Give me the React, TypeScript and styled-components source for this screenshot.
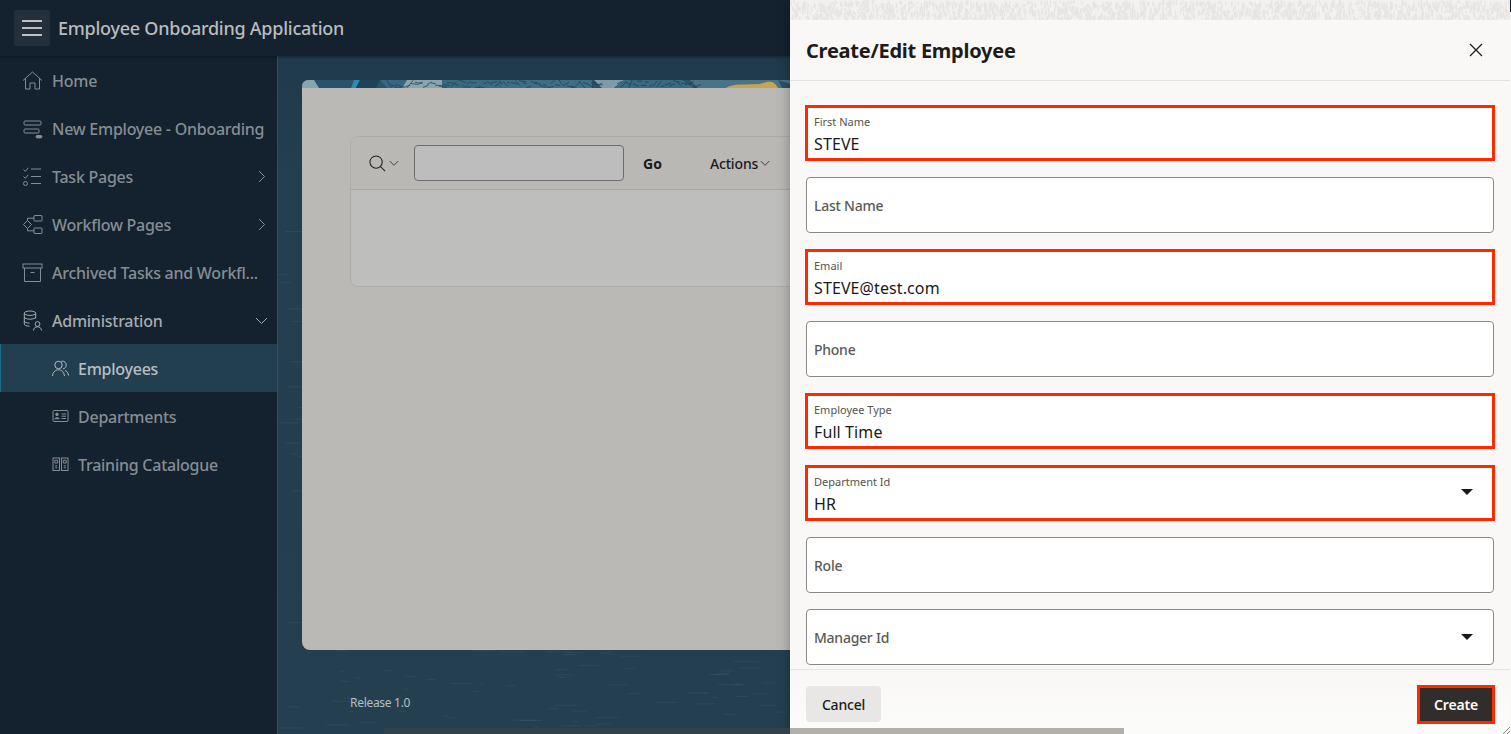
import React from "react";
import styled, { createGlobalStyle } from "styled-components";

const Global = createGlobalStyle`
  html, body { margin: 0; padding: 0; width: 100%; height: 100%; overflow: hidden; background: #f9f8f6; }
  body { font-family: "Noto Sans", "Open Sans", Arial, sans-serif; }
  * { box-sizing: border-box; }
`;

const Page = styled.div`
  position: relative;
  width: 1511px;
  height: 734px;
  overflow: hidden;
  display: flex;
  flex-direction: column;
  background: #14222f;
`;
const TopBar = styled.header`
  height: 56px;
  flex: none;
  display: flex;
  align-items: center;
  gap: 8px;
  padding-left: 14px;
  background: #14222f;
  box-shadow: 0 1px 3px rgba(0, 0, 0, 0.35);
  position: relative;
  z-index: 2;
`;
const MenuButton = styled.div`
  width: 36px;
  height: 36px;
  border-radius: 3px;
  background: #232f3b;
  display: flex;
  flex-direction: column;
  align-items: center;
  justify-content: center;
  gap: 5px;
`;
const MenuLine = styled.span`
  display: block;
  width: 20px;
  height: 2px;
  background: #bcbfc1;
`;
const AppTitle = styled.div`
  font-size: 18px;
  line-height: 24px;
  font-weight: 500;
  letter-spacing: -0.25px;
  color: #b9bcbe;
`;
const Shell = styled.div`
  flex: 1;
  display: flex;
  min-height: 0;
`;
const Sidebar = styled.nav`
  width: 278px;
  flex: none;
  background: #14212e;
  border-right: 1px solid #3a4d5b;
`;
const NavRow = styled.div<{ $sub?: boolean; $active?: boolean; $bright?: boolean }>`
  height: 48px;
  display: flex;
  align-items: center;
  gap: 9px;
  padding-left: ${(p) => (p.$sub ? "52px" : "22px")};
  padding-right: 9px;
  font-size: 16px;
  font-weight: 500;
  letter-spacing: -0.25px;
  color: ${(p) => (p.$active ? "#b9bec1" : p.$bright ? "#a5abaf" : "#858d94")};
  background: ${(p) => (p.$active ? "#223f4f" : "transparent")};
  box-shadow: ${(p) => (p.$active ? "inset 1px 0 0 #1d6b8a" : "none")};
  white-space: nowrap;
`;
const NavLabel = styled.span`
  flex: 1;
  min-width: 0;
  position: relative;
  top: 1px;
`;
const IconBox = styled.svg<{ $size?: number }>`
  width: ${(p) => p.$size ?? 21}px;
  height: ${(p) => p.$size ?? 21}px;
  flex: none;
  fill: none;
  stroke: currentColor;
  stroke-width: 1;
`;
const Main = styled.main`
  position: relative;
  flex: 1;
  min-width: 0;
  padding: 24px 24px 0;
  background: linear-gradient(#1f3a4a 0, #234050 120px, #243f4f 100%);
`;
const WaterSvg = styled.svg`
  position: absolute;
  inset: 0;
  width: 100%;
  height: 100%;
`;
const Hero = styled.svg`
  position: relative;
  display: block;
  width: 100%;
  height: 8px;
  border-radius: 6px 0 0 0;
`;
const Card = styled.section`
  position: relative;
  height: 562px;
  padding: 48px;
  background: #bbb9b6;
  border-radius: 0 0 0 8px;
  color: #1b1a19;
`;
const Region = styled.div`
  height: 151px;
  border: 1px solid #aeacaa;
  border-radius: 8px;
  background: #bebebd;
  overflow: hidden;
`;
const Toolbar = styled.div`
  height: 53px;
  display: flex;
  align-items: center;
  padding-left: 18px;
  background: #bab8b5;
  border-bottom: 1px solid #a9a7a5;
`;
const SearchMenu = styled.div`
  display: flex;
  align-items: center;
  gap: 3px;
  width: 45px;
  color: #1f1e1d;
`;
const SearchInput = styled.div`
  width: 210px;
  height: 36px;
  border: 1px solid #6f6d6b;
  border-radius: 4px;
  background: #bdbdbd;
`;
const GoLabel = styled.span`
  margin-left: 19px;
  font-size: 14px;
  font-weight: 700;
`;
const ActionsMenu = styled.span`
  margin-left: 48px;
  display: flex;
  align-items: center;
  gap: 2px;
  font-size: 14px;
  font-weight: 500;
  letter-spacing: -0.15px;
`;
const Release = styled.div`
  position: relative;
  margin: 45px 0 0 48px;
  font-size: 12px;
  line-height: 16px;
  letter-spacing: -0.3px;
  color: #b4bfc4;
`;
const Dialog = styled.aside`
  position: absolute;
  z-index: 3;
  top: 0;
  left: 790px;
  width: 720px;
  height: 734px;
  display: flex;
  flex-direction: column;
  background: #f9f8f6;
  box-shadow: 0 0 12px rgba(0, 0, 0, 0.32);
`;
const DialogStrip = styled.svg`
  display: block;
  flex: none;
  width: 100%;
  height: 20px;
  background: #f2f1ef;
`;
const DialogHead = styled.div`
  height: 61px;
  flex: none;
  display: flex;
  align-items: center;
  justify-content: space-between;
  padding: 1px 27px 0 16px;
  border-bottom: 1px solid #e3e2e0;
`;
const DialogTitle = styled.h1`
  margin: 0;
  font-size: 20px;
  line-height: 28px;
  font-weight: 700;
  letter-spacing: -0.25px;
  color: #1e1c1b;
`;
const CloseIcon = styled.svg`
  width: 14px;
  height: 14px;
  margin-top: -2px;
  stroke: #201f1e;
  stroke-width: 1.3;
  fill: none;
`;
const DialogBody = styled.div`
  flex: 1;
  min-height: 0;
  padding: 24px 16px 0;
  display: flex;
  flex-direction: column;
  gap: 16px;
`;
const Field = styled.div<{ $marked?: boolean }>`
  position: relative;
  height: 56px;
  flex: none;
  display: flex;
  flex-direction: column;
  justify-content: center;
  background: #fff;
  border: ${(p) => (p.$marked ? "3px solid #fb2a00" : "1px solid #8b8987")};
  border-radius: ${(p) => (p.$marked ? "0" : "4px")};
  padding: ${(p) => (p.$marked ? "0 6px" : "0 7px")};
  margin: ${(p) => (p.$marked ? "0 -1px" : "0")};
`;
const SmallLabel = styled.div`
  font-size: 11px;
  line-height: 14px;
  color: #55534f;
  margin-top: 4px;
`;
const Value = styled.div`
  font-size: 16px;
  line-height: 22px;
  margin-top: 4px;
  letter-spacing: 0.1px;
  color: #1b1a19;
`;
const EmptyLabel = styled.div`
  font-size: 14px;
  line-height: 20px;
  padding-top: 2px;
  font-weight: 500;
  letter-spacing: -0.25px;
  color: #5c5a58;
`;
const SelectArrow = styled.span<{ $marked?: boolean }>`
  position: absolute;
  right: ${(p) => (p.$marked ? "19px" : "20px")};
  top: ${(p) => (p.$marked ? "21px" : "24px")};
  width: 0;
  height: 0;
  border-left: 6.5px solid transparent;
  border-right: 6.5px solid transparent;
  border-top: 6.5px solid #1b1a19;
`;
const DialogFoot = styled.div`
  height: 65px;
  flex: none;
  display: flex;
  align-items: flex-start;
  justify-content: space-between;
  padding: 16px 16px 0;
  border-top: 1px solid #e6e5e3;
  background: linear-gradient(#f8f7f5, #fcfcfb);
`;
const CancelButton = styled.div`
  width: 75px;
  height: 36px;
  display: flex;
  align-items: center;
  justify-content: center;
  border-radius: 4px;
  background: #e8e7e5;
  font-size: 14px;
  font-weight: 500;
  letter-spacing: -0.2px;
  color: #1b1a19;
`;
const CreateButton = styled.div`
  width: 78px;
  height: 39px;
  margin: -1px -1px 0 0;
  display: flex;
  align-items: center;
  justify-content: center;
  border: 3px solid #fb2a00;
  background: #312d2a;
  font-size: 14px;
  font-weight: 600;
  letter-spacing: -0.2px;
  color: #fcfbfa;
`;
const ScrollTrack = styled.div`
  position: absolute;
  z-index: 4;
  left: 384px;
  bottom: 0;
  width: 406px;
  height: 6px;
  background: #33424a;
`;
const ScrollThumb = styled.div`
  position: absolute;
  z-index: 4;
  left: 790px;
  bottom: 0;
  width: 334px;
  height: 6px;
  background: #b3afab;
`;
const RightEdge = styled.div`
  position: absolute;
  z-index: 4;
  left: 1510px;
  top: 12px;
  width: 1px;
  bottom: 0;
  background: #f9f8f6;
`;
const Grip = styled.svg`
  position: absolute;
  z-index: 5;
  right: 1px;
  bottom: 0;
  width: 7px;
  height: 7px;
  stroke: #8d8c8a;
  stroke-width: 1;
`;

function seeded(seed: number) {
  let s = seed;
  return () => {
    s = (s * 16807) % 2147483647;
    return (s - 1) / 2147483646;
  };
}

const waterRand = seeded(77);
const waterDashes = Array.from({ length: 520 }, () => ({
  x: waterRand() * 520,
  y: 150 + waterRand() * 530,
  w: 5 + waterRand() * 20,
}));
const stripRand = seeded(1234);
const stripDashes = Array.from({ length: 1700 }, () => ({
  x: stripRand() * 720,
  y: stripRand() * 18,
  h: 2 + stripRand() * 4,
}));
const squiggleRand = seeded(4242);
function squiggle(from: number, to: number) {
  let d = "";
  for (let x = from; x < to; x += 4) {
    const a = squiggleRand() * 8;
    const b = squiggleRand() * 8;
    d += `M${x} ${a.toFixed(1)}L${(x + 3 + squiggleRand() * 5).toFixed(1)} ${b.toFixed(1)}`;
  }
  return d;
}
const squiggleA = squiggle(85, 300);
const squiggleB = squiggle(315, 395);

const Water = () => (
  <WaterSvg aria-hidden="true">
    {waterDashes.map((d, i) => (
      <rect key={i} x={d.x} y={d.y} width={d.w} height="1" fill="rgba(170,200,215,0.08)" />
    ))}
  </WaterSvg>
);

const HeroArt = () => (
  <Hero aria-hidden="true">
    <rect width="100%" height="8" fill="#2a5268" />
    <path d="M0 0H12L17 8H0Z" fill="#88a5af" />
    <path d="M52 0H58L54 8H49Z" fill="#2a8cb6" />
    <path d="M58 0H78L74 8H54Z" fill="#1f4256" />
    <path d="M78 0H105L100 8H85Z" fill="#36677f" />
    <path d="M105 0H145L150 8H100Z" fill="#8aa5ae" />
    <rect x="140" y="0" width="60" height="8" fill="#3a6a80" />
    <rect x="200" y="0" width="90" height="8" fill="#3e6e84" />
    <path d="M292 0H322L312 8H300Z" fill="#7d9ca8" />
    <path d="M322 0H380L392 8H312Z" fill="#3a6a80" />
    <path d="M388 0H488V8H396Z" fill="#4a7486" />
    <path d="M424 8C430 3 445 5 458 4C466 1 472 0 476 8Z" fill="#c8a44e" />
    <path d="M476 0L488 4V8H480Z" fill="#2b5266" />
    <path d={squiggleA} stroke="#1f3b4a" strokeWidth="0.7" fill="none" />
    <path d={squiggleB} stroke="#1f3b4a" strokeWidth="0.7" fill="none" />
  </Hero>
);

const HomeIcon = () => (
  <IconBox viewBox="0 0 21 21">
    <path d="M1 10.5 10.5 2 20 10.5M3.5 8.5V19H8V13H13V19H17.5V8.5" />
  </IconBox>
);
const FormIcon = () => (
  <IconBox viewBox="0 0 21 21">
    <rect x="2" y="3" width="17" height="4" rx="1" />
    <rect x="2" y="11" width="15" height="4" rx="1" />
    <rect x="14" y="17.5" width="6" height="2.4" rx="1.2" fill="currentColor" />
  </IconBox>
);
const TasksIcon = () => (
  <IconBox viewBox="0 0 21 21">
    <path d="M1.5 3.5 3.4 5.4 6.2 1.8M9 3H19M1.5 10.5 3.4 12.4 6.2 8.8M9 10.5H19M9 17.5H19" />
    <circle cx="3.5" cy="17.5" r="2" />
  </IconBox>
);
const WorkflowIcon = () => (
  <IconBox viewBox="0 0 21 21">
    <path d="M5.5 6.5 9.5 10.5 5.5 14.5 1.5 10.5Z" />
    <rect x="12" y="1.5" width="8" height="5.5" rx="0.5" />
    <rect x="12" y="14" width="8" height="5.5" rx="0.5" />
    <path d="M5.5 6.5V4.2H12M5.5 14.5V16.8H12" />
  </IconBox>
);
const ArchiveIcon = () => (
  <IconBox viewBox="0 0 21 21">
    <rect x="1" y="2" width="19" height="4" />
    <path d="M2.5 6V19.5H18.5V6M8.5 10.5H12.5" />
  </IconBox>
);
const AdminIcon = () => (
  <IconBox viewBox="0 0 21 21">
    <ellipse cx="8" cy="3.2" rx="5.7" ry="2.2" />
    <path d="M2.3 3.2V14C2.3 15.2 4 16 7.5 16.2M13.7 3.2V8.5M2.3 7C2.3 8.2 5 9.2 8 9.2S13.7 8.2 13.7 7M2.3 11C2.3 12.2 4.5 13 7.5 13.2" />
    <circle cx="15.5" cy="14" r="2.4" />
    <path d="M11.5 20.5C11.8 17.8 13.4 16.8 15.5 16.8S19.2 17.8 19.5 20.5" />
  </IconBox>
);
const PeopleIcon = () => (
  <IconBox viewBox="0 0 17 17" $size={17}>
    <circle cx="6.5" cy="5" r="3.7" />
    <path d="M.5 16C1 12 3.3 9.8 6.5 9.8S12 12 12.5 16M9.5 1.2C12.5.8 14.5 3 14.2 5.3 14 7.2 12.8 8.6 11 9M13 10.5C15 11.3 16.3 13.2 16.5 15.5" />
  </IconBox>
);
const CardIcon = () => (
  <IconBox viewBox="0 0 17 17" $size={17}>
    <rect x="1" y="2.5" width="15" height="11" rx="1" />
    <circle cx="5" cy="6.4" r="1.3" fill="currentColor" />
    <path d="M2.8 10.8C3 9.4 7 9.4 7.2 10.8ZM9.5 6H14M9.5 8.2H14M9.5 10.5H14" fill="currentColor" />
  </IconBox>
);
const BookIcon = () => (
  <IconBox viewBox="0 0 17 17" $size={17}>
    <rect x="1" y="2" width="6.5" height="12.5" />
    <rect x="9.5" y="2" width="6.5" height="12.5" />
    <path d="M2.8 4.3H5.7V7H2.8ZM11.3 4.3H14.2V7H11.3ZM3.2 9.8H5.3M3.2 11.8H5.3M11.7 9.8H13.8M11.7 11.8H13.8" />
  </IconBox>
);
const ChevronRight = () => (
  <IconBox viewBox="0 0 13 13" $size={13}>
    <path d="M4 1 9.5 6.5 4 12" />
  </IconBox>
);
const ChevronDown = ({ size = 13 }: { size?: number }) => (
  <IconBox viewBox="0 0 13 13" $size={size}>
    <path d="M1 4 6.5 9.5 12 4" />
  </IconBox>
);
const SearchIcon = () => (
  <IconBox viewBox="0 0 18 18" $size={17}>
    <circle cx="7.5" cy="7.5" r="6.5" strokeWidth="1.1" />
    <path d="M12.2 12.2 17 17" strokeWidth="1.1" />
  </IconBox>
);

const nav = [
  { label: "Home", icon: <HomeIcon /> },
  { label: "New Employee - Onboarding", icon: <FormIcon /> },
  { label: "Task Pages", icon: <TasksIcon />, right: <ChevronRight /> },
  { label: "Workflow Pages", icon: <WorkflowIcon />, right: <ChevronRight /> },
  { label: "Archived Tasks and Workfl...", icon: <ArchiveIcon /> },
  { label: "Administration", icon: <AdminIcon />, right: <ChevronDown />, bright: true },
  { label: "Employees", icon: <PeopleIcon />, sub: true, active: true },
  { label: "Departments", icon: <CardIcon />, sub: true },
  { label: "Training Catalogue", icon: <BookIcon />, sub: true },
];

const fields = [
  { label: "First Name", value: "STEVE" },
  { label: "Last Name" },
  { label: "Email", value: "STEVE@test.com" },
  { label: "Phone" },
  { label: "Employee Type", value: "Full Time" },
  { label: "Department Id", value: "HR", select: true },
  { label: "Role" },
  { label: "Manager Id", select: true },
];

export default function App() {
  return (
    <Page>
      <Global />
      <TopBar>
        <MenuButton>
          <MenuLine />
          <MenuLine />
          <MenuLine />
        </MenuButton>
        <AppTitle>Employee Onboarding Application</AppTitle>
      </TopBar>
      <Shell>
        <Sidebar>
          {nav.map((n) => (
            <NavRow key={n.label} $sub={n.sub} $active={n.active} $bright={n.bright}>
              {n.icon}
              <NavLabel>{n.label}</NavLabel>
              {n.right}
            </NavRow>
          ))}
        </Sidebar>
        <Main>
          <Water />
          <HeroArt />
          <Card>
            <Region>
              <Toolbar>
                <SearchMenu>
                  <SearchIcon />
                  <ChevronDown size={10} />
                </SearchMenu>
                <SearchInput />
                <GoLabel>Go</GoLabel>
                <ActionsMenu>
                  Actions
                  <ChevronDown size={10} />
                </ActionsMenu>
              </Toolbar>
            </Region>
          </Card>
          <Release>Release 1.0</Release>
        </Main>
      </Shell>
      <Dialog>
        <DialogStrip aria-hidden="true">
          {stripDashes.map((d, i) => (
            <rect key={i} x={d.x} y={d.y} width="1.4" height={d.h} fill="#e6e5e3" />
          ))}
        </DialogStrip>
        <DialogHead>
          <DialogTitle>Create/Edit Employee</DialogTitle>
          <CloseIcon viewBox="0 0 14 14">
            <path d="M1 1 13 13M13 1 1 13" />
          </CloseIcon>
        </DialogHead>
        <DialogBody>
          {fields.map((f) => (
            <Field key={f.label} $marked={!!f.value}>
              {f.value ? (
                <>
                  <SmallLabel>{f.label}</SmallLabel>
                  <Value>{f.value}</Value>
                </>
              ) : (
                <EmptyLabel>{f.label}</EmptyLabel>
              )}
              {f.select && <SelectArrow $marked={!!f.value} />}
            </Field>
          ))}
        </DialogBody>
        <DialogFoot>
          <CancelButton>Cancel</CancelButton>
          <CreateButton>Create</CreateButton>
        </DialogFoot>
      </Dialog>
      <ScrollTrack />
      <ScrollThumb />
      <RightEdge />
      <Grip viewBox="0 0 7 7" aria-hidden="true">
        <path d="M0 7 7 0M4 7 7 4" />
      </Grip>
    </Page>
  );
}
